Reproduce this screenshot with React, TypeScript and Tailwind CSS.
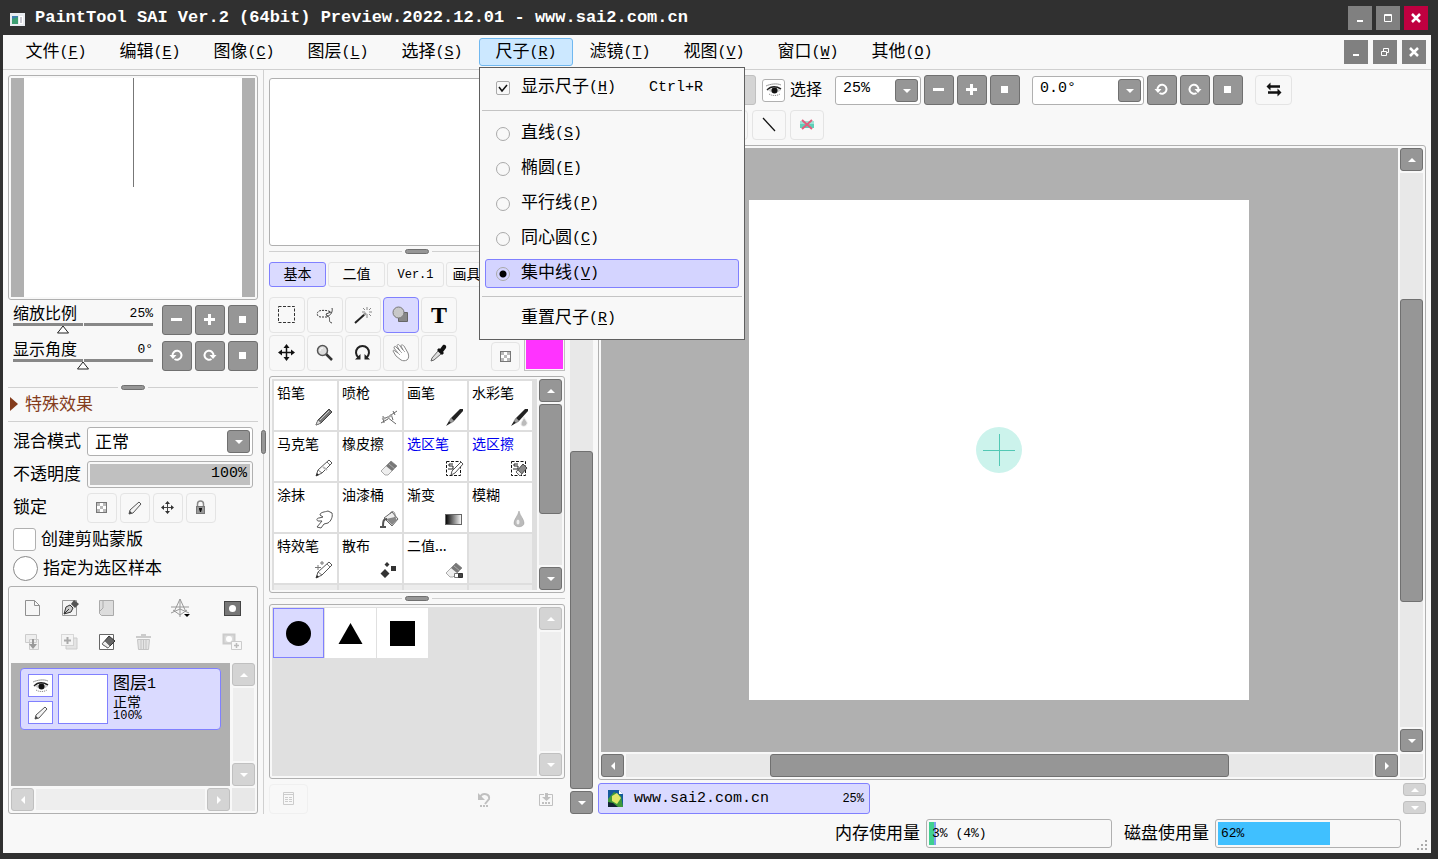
import { useState } from 'react'
import type { ReactNode } from 'react'
import clsx from 'clsx'

type Children = { children?: ReactNode }

const MENUS = [
  { label: '文件', key: 'F' },
  { label: '编辑', key: 'E' },
  { label: '图像', key: 'C' },
  { label: '图层', key: 'L' },
  { label: '选择', key: 'S' },
  { label: '尺子', key: 'R' },
  { label: '滤镜', key: 'T' },
  { label: '视图', key: 'V' },
  { label: '窗口', key: 'W' },
  { label: '其他', key: 'O' },
]

const RULERS = [
  { label: '直线', key: 'S' },
  { label: '椭圆', key: 'E' },
  { label: '平行线', key: 'P' },
  { label: '同心圆', key: 'C' },
  { label: '集中线', key: 'V' },
]

const PENCIL = (
  <>
    <path d="M2 18l2-6L15 2l3 3L8 15z" fill="#fff" stroke="#555" />
    <path d="M4 12l4 3M13 4l3 3" stroke="#777" fill="none" />
    <path d="M2 18l1-3 2 2z" fill="#222" />
  </>
)

const ERASER = (
  <>
    <path d="M2 13L12 3l6 5L9 17H6z" fill="#eee" stroke="#aaa" />
    <path d="M7 8l5-5 6 5-5 5z" fill="#777" />
    <path d="M10 6l6 5" stroke="#aaa" />
  </>
)

const BRUSH = (
  <>
    <path d="M7 11L16 2h3v2l-9 10z" fill="#222" />
    <path d="M7 11l3 3-3 2-2-2z" fill="#999" stroke="#555" strokeWidth=".5" />
    <path d="M5 14l2 2-5 3z" fill="#222" />
  </>
)

const ICONS = {
  marquee: <rect x="1.500" y="1.500" width="16" height="16" fill="none" stroke="#333" strokeDasharray="3 1.500" />,
  lasso: (
    <>
      <path d="M12 12H6c-4 0-5-4-2-6 3-1 8-1 12 1" fill="none" stroke="#333" strokeDasharray="2 1" />
      <path d="M17 3c1 3-1 8-5 8l-1-2 5-2M12 11c5 1 0 6 5 7" fill="none" stroke="#444" />
    </>
  ),
  wand: (
    <>
      <path d="M2 18L12 9" stroke="#222" strokeWidth="2" />
      <path d="M11 10l2-2" stroke="#999" strokeWidth="2" />
      <path d="M14 2v3M14 9v4M9 7h3M16 7h3M10 3l2 2M16 5l2-2M16 9l2 2" stroke="#888" />
    </>
  ),
  shapes: (
    <>
      <path d="M7.500 7.500h9v9h-9z" fill="#888" stroke="#666" />
      <circle cx="7.500" cy="7.500" r="5.500" fill="#c8c8c8" stroke="#777" />
    </>
  ),
  move: (
    <>
      <path d="M9.500 3v13M3 9.500h13" stroke="#111" strokeWidth="1.500" />
      <path d="M9.500 1l3 4h-6zM9.500 18l3-4h-6zM1 9.500l4-3v6zM18 9.500l-4-3v6z" fill="#111" />
    </>
  ),
  zoom: (
    <>
      <path d="M11 11l6 6" stroke="#333" strokeWidth="2.500" />
      <circle cx="7.500" cy="7.500" r="5" fill="#ddd" stroke="#555" strokeWidth="1.500" />
      <path d="M5 8c0-2 1-3 3-3" stroke="#fff" fill="none" />
    </>
  ),
  turn: (
    <>
      <path d="M5.500 14.500a6.500 6.500 0 1 1 8 0" fill="none" stroke="#222" strokeWidth="2" />
      <path d="M2 16.500h5.500V11zM17 16.500h-5.500V11z" fill="#222" />
    </>
  ),
  hand: (
    <>
      <path
        d="M2 8c0-1 1-1 2 0l3 2-4-5c0-2 1-2 2-1l4 4-3-5c0-2 2-2 3 0l3 4-2-4c0-2 2-1 3 0l4 7c1 3 1 5-1 7-2 1-4 1-6 0l-5-4z"
        fill="#fff"
        stroke="#888"
      />
      <path d="M9 8l2 2M12 7l2 2M7 10l2 2" stroke="#aaa" />
    </>
  ),
  dropper: (
    <>
      <path d="M9 8l3 3-7 6-3 1 1-3z" fill="#ddd" stroke="#666" />
      <path d="M8 7l2-2 1 1 3-4c2-1 4 1 3 3l-3 4 1 1-2 2z" fill="#111" />
    </>
  ),
  pencil: (
    <>
      <path d="M2 18l2-5L15 2l3 3L7 16z" fill="#777" stroke="#444" />
      <path d="M4 13l3 3-5 2z" fill="#ddd" stroke="#666" strokeWidth=".5" />
      <path d="M6 13L15 4" stroke="#ccc" />
    </>
  ),
  airbrush: (
    <>
      <path d="M3 12l6-2 9-6M8 10l9 7M4 9l1 7M12 7l2 6M2 16l7-4M14 4l2 4" stroke="#666" fill="none" />
      <path d="M8 11l5-3M3 12l4-1" stroke="#aaa" strokeWidth="2" />
    </>
  ),
  brush: BRUSH,
  watercolor: (
    <>
      {BRUSH}
      <path d="M15 10c1 3 4 5 3 7-1 3-6 3-6 0 0-2 2-4 3-7z" fill="#bbb" stroke="#eee" />
    </>
  ),
  marker: (
    <>
      {PENCIL}
      <path d="M9 9l4 3" stroke="#bbb" strokeWidth="2" />
    </>
  ),
  eraser: ERASER,
  selectPen: (
    <>
      <rect x="2.500" y="3.500" width="14" height="14" fill="none" stroke="#111" strokeDasharray="3 1.500" />
      <path d="M9 6H5v2h4v3H4" stroke="#222" fill="none" />
      <path d="M7 17l1-4 9-9 2 2-8 9z" fill="#fff" stroke="#555" />
    </>
  ),
  selectEraser: (
    <>
      <rect x="2.500" y="3.500" width="14" height="14" fill="none" stroke="#111" strokeDasharray="3 1.500" />
      <path d="M9 6H5v2h4v3H4" stroke="#222" fill="none" />
      <path d="M7 14l7-8 4 4-7 8z" fill="#888" stroke="#444" />
      <path d="M7 14l4 4 2-2-4-4z" fill="#eee" stroke="#666" />
    </>
  ),
  smudge: (
    <path
      d="M3 18l5-6H4c-2-1-1-3 1-3l4-1-3-2c0-3 5-3 8-4l4 2c1 4-1 8-4 10l-4 1-3 4z"
      fill="#fff"
      stroke="#555"
    />
  ),
  bucket: (
    <>
      <path d="M5 9l8-6 6 7-6 7z" fill="#eee" stroke="#666" />
      <path d="M7 10l9-2 2 3-5 5z" fill="#888" />
      <path d="M11 5c2-5 6-2 5 4" stroke="#777" fill="none" />
      <path d="M8 10c-4 0-4 3-4 8M1 18h6" stroke="#555" strokeWidth="2" fill="none" />
    </>
  ),
  blur: (
    <>
      <path d="M10 2c1 5 5 8 5 12 0 5-10 5-10 0 0-4 4-7 5-12z" fill="#bbb" stroke="#999" strokeWidth=".5" />
      <ellipse cx="9" cy="13" rx="1.500" ry="2.500" fill="#eee" />
    </>
  ),
  effect: (
    <>
      {PENCIL}
      <path d="M4 5v5M1 7.500h6M8 1v4M6 3h4" stroke="#777" />
    </>
  ),
  scatter: (
    <path d="M8 2l2.500 2.500L8 7 5.500 4.500zM6 9l4.500 4.500L6 18l-4.500-4.500zM12 6h5v5h-5z" fill="#333" />
  ),
  binaryEraser: (
    <>
      {ERASER}
      <path d="M10.500 13.500h4v4h-4z" fill="#fff" stroke="#777" />
      <path d="M14.500 13.500h4v4h-4z" fill="#444" stroke="#333" />
    </>
  ),
  checker: (
    <>
      <rect x="4.500" y="4.500" width="10" height="10" fill="#fff" stroke="#777" />
      <path d="M5 5h3v3H5zM11 5h3v3h-3zM8 8h3v3H8zM5 11h3v3H5zM11 11h3v3h-3z" fill="#bbb" />
    </>
  ),
  thinPencil: (
    <>
      <path d="M4 16l1-4 9-8 2 2-8 9z" fill="#f4f4f4" stroke="#555" />
      <path d="M4 16l1-3 2 2z" fill="#444" />
    </>
  ),
  thinMove: (
    <>
      <path d="M9.500 4v11M4 9.500h11" stroke="#444" />
      <path d="M9.500 3l2.500 3H7zM9.500 16l2.500-3H7zM3 9.500L6 7v5zM16 9.500L13 7v5z" fill="#333" />
    </>
  ),
  lock: (
    <>
      <path d="M6.500 9V6c0-4 6-4 6 0v3" fill="none" stroke="#888" strokeWidth="1.500" />
      <rect x="5.500" y="8.500" width="8" height="7" fill="#999" stroke="#777" />
      <path d="M8 10h3v1l-1 3H9l-1-3z" fill="#111" />
    </>
  ),
  eye: (
    <>
      <path d="M2 6c4-2 11-3 15-1" stroke="#999" fill="none" />
      <path d="M3 10c4-4 9-4 14-1" stroke="#222" fill="none" strokeWidth="1.500" />
      <path d="M4 10c3-2 9-2 13 0-4 4-9 4-13 0z" fill="#ccc" />
      <circle cx="10.500" cy="10.500" r="3" fill="#111" />
      <path d="M5 14c3 2 8 2 11 0" stroke="#777" strokeDasharray="1 1" fill="none" />
    </>
  ),
  newLayer: <path d="M3.500 2.500h9l5 5v10h-14zM12.500 2.500v5h5" fill="#f6f6f6" stroke="#909090" />,
  penLayer: (
    <>
      <path d="M3.500 2.500h14v15h-14z" fill="#f4f4f4" stroke="#999" />
      <path d="M5 16l2-7 4-2 3 3-2 4z" fill="#ccc" stroke="#333" />
      <path d="M5 16l5-5" stroke="#333" />
      <path d="M12 6l3-4 5 4-4 4z" fill="#555" />
    </>
  ),
  folder: (
    <>
      <path d="M3.500 2.500h14v15h-12l-2-2z" fill="#ddd" stroke="#aaa" />
      <path d="M7 3v7l-3 3" stroke="#aaa" fill="none" />
    </>
  ),
  perspective: (
    <>
      <path d="M10 1L4 14M10 1l6 13M10 1v18M1 9h18M1 15l9-4 9 4M3 12l7 5 7-5" stroke="#999" fill="none" />
      <path d="M14 16h6l-3 3z" fill="#000" />
    </>
  ),
  mask: (
    <>
      <rect x="2.500" y="3.500" width="16" height="14" fill="#777" stroke="#444" />
      <circle cx="10.500" cy="10.500" r="3.500" fill="#fff" />
    </>
  ),
  mergeDown: (
    <>
      <path d="M3.500 2.500h11v8h-11zM7.500 7.500h9v10h-9z" fill="#eee" stroke="#ccc" />
      <path d="M10 7v5H7l4 5 4-5h-3V7z" fill="#999" />
    </>
  ),
  duplicate: (
    <>
      <path d="M7 6h11v11H7z" fill="#e4e4e4" stroke="#ccc" />
      <path d="M2.500 2.500h12v11h-12z" fill="#f4f4f4" stroke="#bbb" strokeDasharray="1 1" />
      <path d="M8.500 5v7M5 8.500h7" stroke="#aaa" strokeWidth="2" />
    </>
  ),
  clearLayer: (
    <>
      <path d="M3.500 2.500h14v15h-14z" fill="#fff" stroke="#666" />
      <path d="M6 12l7-8 6 5-7 7z" fill="#666" stroke="#333" />
      <path d="M6 12l3-3 5 5-2 2z" fill="#eee" stroke="#777" />
    </>
  ),
  trash: (
    <>
      <path d="M3 5h15M8 3h5" stroke="#ccc" strokeWidth="2" />
      <path d="M4.500 7.500h12l-1 10h-10z" fill="#e4e4e4" stroke="#c4c4c4" />
      <path d="M8 8v9M10.500 8v9M13 8v9" stroke="#c4c4c4" />
    </>
  ),
  addMask: (
    <>
      <path d="M1.500 2.500h11v9h-11z" fill="#ddd" stroke="#ccc" strokeWidth="2" />
      <circle cx="7" cy="7" r="3" fill="#fff" />
      <path d="M9.500 9.500h10v8h-10z" fill="#f8f8f8" stroke="#ccc" />
      <path d="M14.500 11v5M12 13.500h5" stroke="#bbb" strokeWidth="1.500" />
    </>
  ),
  line: <path d="M4 3l12 13" stroke="#111" strokeWidth="1.200" />,
  noColor: (
    <>
      <path d="M3 6h14v7H3z" fill="#5fcfb8" />
      <path d="M3 6h14v3H3z" fill="#9be3d5" />
      <path d="M5 5l10 9M15 5L5 14" stroke="#e05f7c" strokeWidth="2" />
    </>
  ),
  swap: (
    <>
      <path d="M6 6.500h10M4 12.500h10" stroke="#111" strokeWidth="2.500" />
      <path d="M2.500 6.500l4-4v8zM17.500 12.500l-4-4v8z" fill="#111" />
    </>
  ),
  list: (
    <path
      d="M4.500 3.500h10v12h-10zM5 5.500h9M6 8.500h3M10 8.500h3M6 10.500h3M10 10.500h3M6 12.500h3M10 12.500h3"
      fill="none"
      stroke="#ccc"
    />
  ),
  undo: (
    <>
      <path d="M6 8c3-5 10-3 9 2l-4 5" stroke="#c0c0c0" strokeWidth="2" fill="none" />
      <path d="M4 4v7h7z" fill="#c0c0c0" />
      <path d="M6 17h8" stroke="#c0c0c0" strokeWidth="2" strokeDasharray="2 1" />
    </>
  ),
  save: (
    <>
      <path d="M8 5.500H3.500v11h13v-11H12" fill="none" stroke="#c0c0c0" />
      <path d="M9 4h3v4h3l-4.500 4L6 8h3z" fill="#c0c0c0" />
      <path d="M6 14h9" stroke="#c0c0c0" strokeWidth="2" strokeDasharray="2 1" />
    </>
  ),
  minus: <path d="M4 9.500h11" stroke="#fff" strokeWidth="3" />,
  plus: <path d="M4 9.500h11M9.500 4v11" stroke="#fff" strokeWidth="3" />,
  square: <path d="M6 6h7v7H6z" fill="#fff" />,
  rotateLeft: (
    <>
      <path d="M5.500 9.500a4.500 4.500 0 1 1 2 3.500" fill="none" stroke="#fff" strokeWidth="2" />
      <path d="M2.500 9h7l-3.500 4z" fill="#fff" />
    </>
  ),
  rotateRight: (
    <>
      <path d="M13.500 9.500a4.500 4.500 0 1 0-2 3.500" fill="none" stroke="#fff" strokeWidth="2" />
      <path d="M16.500 9h-7l3.500 4z" fill="#fff" />
    </>
  ),
  up: <path d="M10 8l4 4H6z" fill="#fff" />,
  down: <path d="M6 8h8l-4 4z" fill="#fff" />,
  left: <path d="M12 6v8l-4-4z" fill="#fff" />,
  right: <path d="M8 6v8l4-4z" fill="#fff" />,
  winMin: <path d="M7 13h6" stroke="#fff" strokeWidth="2" />,
  winMax: <path d="M6.500 6.500h7v7h-7zM6 7.500h8" fill="none" stroke="#fff" />,
  winRestore: <path d="M8.500 9V6.500h5v4H12M6.500 9.500h5v4h-5z" fill="none" stroke="#fff" />,
  winClose: <path d="M6 6l8 8M14 6l-8 8" stroke="#fff" strokeWidth="2.500" />,
}

type IconName = keyof typeof ICONS | 'gradient'

const TOOLS: { name: string; icon?: IconName }[] = [
  { name: '选框', icon: 'marquee' },
  { name: '套索', icon: 'lasso' },
  { name: '魔棒', icon: 'wand' },
  { name: '形状', icon: 'shapes' },
  { name: '文字' },
  { name: '移动', icon: 'move' },
  { name: '缩放', icon: 'zoom' },
  { name: '旋转', icon: 'turn' },
  { name: '抓手', icon: 'hand' },
  { name: '吸管', icon: 'dropper' },
]

const BRUSHES: { name: string; icon: IconName; blue?: boolean }[] = [
  { name: '铅笔', icon: 'pencil' },
  { name: '喷枪', icon: 'airbrush' },
  { name: '画笔', icon: 'brush' },
  { name: '水彩笔', icon: 'watercolor' },
  { name: '马克笔', icon: 'marker' },
  { name: '橡皮擦', icon: 'eraser' },
  { name: '选区笔', icon: 'selectPen', blue: true },
  { name: '选区擦', icon: 'selectEraser', blue: true },
  { name: '涂抹', icon: 'smudge' },
  { name: '油漆桶', icon: 'bucket' },
  { name: '渐变', icon: 'gradient' },
  { name: '模糊', icon: 'blur' },
  { name: '特效笔', icon: 'effect' },
  { name: '散布', icon: 'scatter' },
  { name: '二值...', icon: 'binaryEraser' },
]

function Icon({ name }: { name: IconName }) {
  if (name === 'gradient') {
    return (
      <svg width="20" height="20" viewBox="0 0 20 20" className="shrink-0">
        <defs>
          <linearGradient id="ramp">
            <stop offset="0" stopColor="#000" />
            <stop offset="1" stopColor="#fff" />
          </linearGradient>
        </defs>
        <rect x="1.500" y="5.500" width="16" height="10" fill="url(#ramp)" stroke="#666" />
      </svg>
    )
  }
  return (
    <svg width="20" height="20" viewBox="0 0 20 20" fill="none" className="shrink-0">
      {ICONS[name]}
    </svg>
  )
}

function Latin({ children, className = 'text-[15px]' }: Children & { className?: string }) {
  return <span className={clsx("align-[1px] font-['Liberation_Mono',monospace]", className)}>{children}</span>
}

function Accel({ label, letter }: { label: string; letter: string }) {
  return (
    <span className="whitespace-nowrap">
      {label}
      <Latin>
        (<u className="underline-offset-2">{letter}</u>)
      </Latin>
    </span>
  )
}

// Raised dark button: zoom, rotate and scroll arrows
function GrayButton({ icon, label, className = 'size-[30px]', disabled = false }: {
  icon: IconName
  label: string
  className?: string
  disabled?: boolean
}) {
  return (
    <button
      aria-label={label}
      disabled={disabled}
      className={clsx(
        'flex shrink-0 items-center justify-center overflow-hidden rounded-[3px] border',
        disabled ? 'border-[#c0c0c0] bg-[#d4d4d4]' : 'border-[#707070] bg-[#969696]',
        className
      )}
    >
      <Icon name={icon} />
    </button>
  )
}

// Flat button with a faint outline
function FlatButton({ icon, label, className = 'size-[30px]' }: { icon: IconName; label: string; className?: string }) {
  return (
    <button
      aria-label={label}
      className={clsx('flex shrink-0 items-center justify-center rounded-[4px] border border-[#e4e4e4]', className)}
    >
      <Icon name={icon} />
    </button>
  )
}

function Panel({ children, className }: Children & { className?: string }) {
  return <div className={clsx('rounded-[3px] border border-[#b0b0b0] p-[2px]', className)}>{children}</div>
}

function Splitter() {
  return (
    <div className="flex h-[5px] shrink-0 items-center gap-[3px]">
      <div className="h-px flex-1 bg-[#d0d0d0]" />
      <div className="h-[5px] w-6 rounded-full border border-[#707070] bg-[#969696]" />
      <div className="h-px flex-1 bg-[#d0d0d0]" />
    </div>
  )
}

function VScroll({ thumb, disabled }: { thumb?: string; disabled?: boolean }) {
  return (
    <div className="flex w-[23px] shrink-0 flex-col gap-[2px]">
      <GrayButton icon="up" label="向上" className="h-[23px]" disabled={disabled} />
      <div className={clsx('flex min-h-0 flex-1 flex-col', disabled ? 'mx-px bg-[#eeeeee]' : 'bg-[#e8e8e8]')}>
        {thumb && <div className={clsx('rounded-[3px] border border-[#707070] bg-[#969696]', thumb)} />}
      </div>
      <GrayButton icon="down" label="向下" className="h-[23px]" disabled={disabled} />
    </div>
  )
}

function HScroll({ thumb, disabled }: { thumb?: string; disabled?: boolean }) {
  return (
    <div className="flex h-[23px] min-w-0 flex-1 gap-[2px]">
      <GrayButton icon="left" label="向左" className="w-[23px]" disabled={disabled} />
      <div className={clsx('flex min-w-0 flex-1', disabled ? 'my-px bg-[#eeeeee]' : 'bg-[#e8e8e8]')}>
        {thumb && <div className={clsx('rounded-[3px] border border-[#707070] bg-[#969696]', thumb)} />}
      </div>
      <GrayButton icon="right" label="向右" className="w-[23px]" disabled={disabled} />
    </div>
  )
}

function Select({ label, value, className, textClass }: {
  label: string
  value: string
  className?: string
  textClass: string
}) {
  return (
    <div className={clsx('relative h-[29px]', className)}>
      <select
        aria-label={label}
        className={clsx(
          'block size-full appearance-none rounded-[3px] border border-[#b0b0b0] bg-white pb-[2px] pl-[7px]',
          textClass
        )}
      >
        <option>{value}</option>
      </select>
      <span className="pointer-events-none absolute top-[3px] right-[3px] flex size-[23px] items-center justify-center rounded-[3px] border border-[#707070] bg-[#969696]">
        <Icon name="down" />
      </span>
    </div>
  )
}

function NavSlider({ label, value, percent }: { label: string; value: string; percent: number }) {
  return (
    <label className="relative block h-[30px] min-w-0 flex-1">
      <span className="flex h-[18px] items-center justify-between text-[16px]">
        <span className="pb-1">{label}</span>
        <Latin className="text-[13px]">{value}</Latin>
      </span>
      <span className="flex h-[3px] gap-px">
        <span className="flex-1 bg-[#888]" />
        <span className="flex-1 bg-[#888]" />
      </span>
      <svg
        className="absolute top-5 -translate-x-1/2"
        style={{ left: `${percent}%` }}
        width="14"
        height="9"
        viewBox="0 0 14 9"
      >
        <path d="M7 1l5.500 7h-11z" fill="#fff" stroke="#222" />
      </svg>
      <input type="range" aria-label={label} defaultValue={percent} className="absolute inset-0 size-full opacity-0" />
    </label>
  )
}

function WindowButton({ icon, label, red }: { icon: IconName; label: string; red?: boolean }) {
  return (
    <button
      aria-label={label}
      className={clsx('flex size-6 items-center justify-center', red ? 'bg-[#c00040]' : 'bg-[#808080]')}
    >
      <Icon name={icon} />
    </button>
  )
}

function TitleBar() {
  return (
    <header className="flex h-[35px] shrink-0 items-center pr-[3px] pl-[7px] text-white">
      <svg width="15" height="13" viewBox="0 0 15 13" className="mt-1">
        <path d="M0 0h15v13H0z" fill="#e8ecf0" />
        <path d="M2 3h6v8H2z" fill="#3f7fb0" />
        <path d="M2 6l6-2v7H2z" fill="#3d9f72" />
        <path d="M9 3h4v8H9z" fill="#fff" />
        <path d="M10 5h2M10 7h2M10 9h2" stroke="#99a" />
      </svg>
      <h1 className="ml-[10px] flex-1 font-['Liberation_Mono',monospace] text-[17px] font-bold whitespace-nowrap">
        PaintTool SAI Ver.2 (64bit) Preview.2022.12.01 - www.sai2.com.cn
      </h1>
      <div className="flex gap-1">
        <WindowButton icon="winMin" label="最小化" />
        <WindowButton icon="winMax" label="最大化" />
        <WindowButton icon="winClose" label="关闭" red />
      </div>
    </header>
  )
}

function RulerMenu({ ruler, onPick }: { ruler: string; onPick: (key: string) => void }) {
  return (
    <div className="absolute top-[29px] left-0 z-10 w-[266px] border border-[#606060] bg-[#f8f8f8] pt-[2px] pb-[3px]">
      <div className="px-[5px] py-[3px]">
        <label className="flex h-[29px] items-center px-[11px]">
          <input type="checkbox" defaultChecked className="size-[14px] appearance-none rounded-[2px] border border-[#aaa]" />
          <svg width="14" height="14" viewBox="0 0 14 14" className="pointer-events-none absolute">
            <path d="M3 6l3 4 5-6" fill="none" stroke="#111" strokeWidth="1.500" />
          </svg>
          <span className="ml-[11px] w-32 pb-[3px]">
            <Accel label="显示尺子" letter="H" />
          </span>
          <Latin className="pt-[2px] text-[15px]">Ctrl+R</Latin>
        </label>
      </div>
      <hr className="mx-[2px] my-[5px] border-[#c4c4c4]" />
      {RULERS.map((r) => (
        <div key={r.key} className="px-[5px] py-[3px]">
          <label
            className={clsx(
              'flex h-[29px] items-center rounded-[3px] border px-[10px]',
              r.key === ruler ? 'border-[#8080ff] bg-[#d4d4ff]' : 'border-transparent'
            )}
          >
            <input
              type="radio"
              name="ruler"
              checked={r.key === ruler}
              onChange={() => onPick(r.key)}
              className="size-[14px] appearance-none rounded-full border border-[#aaa] checked:bg-[radial-gradient(circle,#000_3px,transparent_4px)]"
            />
            <span className="ml-[11px] pb-[3px]">
              <Accel label={r.label} letter={r.key} />
            </span>
          </label>
        </div>
      ))}
      <hr className="mx-[2px] mt-[5px] mb-1 border-[#c4c4c4]" />
      <div className="px-[5px] py-[3px]">
        <button className="flex h-[29px] w-full items-center pb-[3px] pl-9">
          <Accel label="重置尺子" letter="R" />
        </button>
      </div>
    </div>
  )
}

function MenuBar() {
  const [ruler, setRuler] = useState('V')

  return (
    <nav className="flex h-[35px] shrink-0 items-start border-b border-[#d0d0d0] pt-[3px] pl-[6px] text-[17px]">
      {MENUS.map((m) => (
        <div key={m.key} className="relative w-[94px]">
          <button
            className={clsx(
              'flex h-7 w-full items-center justify-center rounded-[3px] border pb-[2px]',
              m.key === 'R' ? 'border-[#70b8f0] bg-[#cce8ff]' : 'border-transparent'
            )}
          >
            <Accel label={m.label} letter={m.key} />
          </button>
          {m.key === 'R' && <RulerMenu ruler={ruler} onPick={setRuler} />}
        </div>
      ))}
      <div className="mt-[2px] mr-[5px] ml-auto flex gap-[5px]">
        <WindowButton icon="winMin" label="最小化文档" />
        <WindowButton icon="winRestore" label="还原文档" />
        <WindowButton icon="winClose" label="关闭文档" />
      </div>
    </nav>
  )
}

function LayerPanel() {
  const tools: IconName[][] = [
    ['newLayer', 'penLayer', 'folder'],
    ['mergeDown', 'duplicate', 'clearLayer', 'trash'],
  ]

  return (
    <Panel className="mt-[5px] flex min-h-0 flex-1 flex-col">
      <div className="flex h-[74px] shrink-0 flex-col justify-center gap-[6px] pr-[9px] pb-[2px] pl-[7px]">
        {tools.map((row, i) => (
          <div key={i} className="flex h-7 items-center gap-[9px]">
            {row.map((t) => (
              <button key={t} aria-label={t} className="flex size-7 items-center justify-center">
                <Icon name={t} />
              </button>
            ))}
            {i === 0 && (
              <button aria-label="perspective" className="ml-[37px] flex size-7 items-center justify-center">
                <Icon name="perspective" />
              </button>
            )}
            <button aria-label="mask" className="ml-auto flex size-7 items-center justify-center">
              <Icon name={i === 0 ? 'mask' : 'addMask'} />
            </button>
          </div>
        ))}
      </div>
      <div className="flex min-h-0 flex-1 gap-[2px]">
        <div className="min-w-0 flex-1 bg-[#b0b0b0] pt-[5px] pr-[9px] pl-[9px]">
          <div className="flex h-[62px] rounded-[4px] border border-[#8080ff] bg-[#dadaff] p-[5px] pl-[7px]">
            <div className="flex flex-col gap-1">
              <button aria-label="显示图层" className="flex h-[23px] w-[25px] items-center justify-center border border-[#8080ff] bg-white">
                <Icon name="eye" />
              </button>
              <button aria-label="编辑图层" className="flex h-[23px] w-[25px] items-center justify-center border border-[#8080ff] bg-white">
                <Icon name="thinPencil" />
              </button>
            </div>
            <div className="ml-[5px] size-[50px] border border-[#8080ff] bg-white" />
            <div className="ml-[5px] flex flex-col">
              <span className="h-[18px] text-[17px] leading-[16px]">
                图层<Latin>1</Latin>
              </span>
              <span className="h-[18px] text-[14px] leading-[18px]">正常</span>
              <Latin className="text-[12px] leading-[12px]">100%</Latin>
            </div>
          </div>
        </div>
        <VScroll disabled />
      </div>
      <div className="mt-[2px] flex gap-[2px]">
        <HScroll disabled />
        <div className="w-[23px] bg-[#e8e8e8]" />
      </div>
    </Panel>
  )
}

function LeftColumn() {
  return (
    <aside className="relative flex w-[261px] shrink-0 flex-col border-r border-[#d0d0d0] px-[5px] pt-[5px] text-[17px]">
      <Panel className="h-[225px] shrink-0">
        <div className="flex h-full justify-center bg-[#b0b0b0] px-[13px]">
          <div className="flex w-full justify-center bg-white">
            <div className="h-[109px] w-px bg-[#777]" />
          </div>
        </div>
      </Panel>
      <div className="mt-[5px] flex gap-[9px] pl-[5px]">
        <NavSlider label="缩放比例" value="25%" percent={36} />
        <div className="flex gap-[3px]">
          <GrayButton icon="minus" label="缩小" />
          <GrayButton icon="plus" label="放大" />
          <GrayButton icon="square" label="重置缩放" />
        </div>
      </div>
      <div className="mt-[6px] mb-[14px] flex gap-[9px] pl-[5px]">
        <NavSlider label="显示角度" value="0°" percent={50} />
        <div className="flex gap-[3px]">
          <GrayButton icon="rotateLeft" label="向左旋转" />
          <GrayButton icon="rotateRight" label="向右旋转" />
          <GrayButton icon="square" label="重置角度" />
        </div>
      </div>
      <Splitter />
      <button className="flex h-8 shrink-0 items-center border-b border-[#d0d0d0] pb-1 pl-[2px] text-[#843c1c]">
        <svg width="8" height="14" viewBox="0 0 8 14">
          <path d="M0 0l8 7-8 7z" fill="#843c1c" />
        </svg>
        <span className="ml-[7px] pb-[2px]">特殊效果</span>
      </button>
      <div className="mt-[5px] flex h-[29px] items-center px-[5px]">
        <span className="w-[74px] shrink-0 pb-1">混合模式</span>
        <Select label="混合模式" value="正常" className="flex-1" textClass="text-[17px]" />
      </div>
      <div className="mt-[5px] flex h-[27px] items-center px-[5px]">
        <span className="w-[74px] shrink-0 pb-1">不透明度</span>
        <Panel className="h-[27px] flex-1">
          <div className="flex h-full items-center justify-end bg-[#c0c0c0] pr-[3px]">
            <Latin>100%</Latin>
          </div>
        </Panel>
      </div>
      <div className="mt-[5px] flex h-[30px] items-center gap-[3px] pl-[5px]">
        <span className="w-[71px] shrink-0 pb-1">锁定</span>
        <FlatButton icon="checker" label="锁定不透明度" />
        <FlatButton icon="thinPencil" label="锁定绘制" />
        <FlatButton icon="thinMove" label="锁定移动" />
        <FlatButton icon="lock" label="全部锁定" />
      </div>
      <label className="mt-[5px] flex h-[23px] items-center gap-[5px] pl-[5px]">
        <input type="checkbox" className="size-[23px] appearance-none rounded-[3px] border border-[#b0b0b0] bg-white" />
        <span className="pb-1">创建剪贴蒙版</span>
      </label>
      <label className="mt-[5px] flex h-[25px] items-center gap-[5px] pl-[5px]">
        <input type="radio" className="size-[25px] appearance-none rounded-full border border-[#888] bg-white" />
        <span className="pb-1">指定为选区样本</span>
      </label>
      <LayerPanel />
      <div className="absolute top-[360px] -right-[3px] h-6 w-[5px] rounded-full border border-[#707070] bg-[#969696]" />
    </aside>
  )
}

function BrushPanel() {
  return (
    <Panel className="mt-[5px] flex h-[217px] shrink-0 gap-[2px]">
      <div className="grid min-w-0 flex-1 auto-rows-[49px] grid-cols-4 gap-[2px] overflow-hidden bg-[#dedede] pt-[2px] pr-[5px] pl-[2px]">
        {BRUSHES.map((b) => (
          <button
            key={b.name}
            className="flex flex-col items-start justify-between bg-white px-[3px] pt-px pb-[3px] text-[14px] leading-5"
          >
            <span className={b.blue ? 'text-[#0000f0]' : undefined}>{b.name}</span>
            <span className="self-end">
              <Icon name={b.icon} />
            </span>
          </button>
        ))}
        {[0, 1, 2, 3, 4].map((n) => (
          <div key={n} className="bg-[#ececec]" />
        ))}
      </div>
      <VScroll thumb="h-[110px]" />
    </Panel>
  )
}

function ShapePanel() {
  const shapes = [
    { name: '圆形', path: <circle cx="12.500" cy="12.500" r="12.500" /> },
    { name: '三角形', path: <path d="M12.500 2l12 21H.5z" /> },
    { name: '方形', path: <path d="M0 0h25v25H0z" /> },
  ]

  return (
    <Panel className="mt-[3px] flex min-h-0 flex-1 gap-[2px]">
      <div className="flex min-w-0 flex-1 items-start gap-px bg-[#e0e0e0] pt-px pl-px">
        {shapes.map((s, i) => (
          <button
            key={s.name}
            aria-label={s.name}
            className={clsx(
              'flex h-[50px] w-[51px] items-center justify-center',
              i === 0 ? 'border border-[#8080ff] bg-[#dadaff]' : 'bg-white'
            )}
          >
            <svg width="25" height="25" viewBox="0 0 25 25">
              {s.path}
            </svg>
          </button>
        ))}
      </div>
      <VScroll disabled />
    </Panel>
  )
}

function ToolColumn() {
  return (
    <section className="flex w-[334px] shrink-0 gap-[5px] px-[5px]">
      <div className="flex min-w-0 flex-1 flex-col pt-2">
        <Panel className="mb-[3px] h-[168px] shrink-0 bg-white" />
        <Splitter />
        <div className="mt-2 flex shrink-0 gap-[2px] text-[14px]">
          {['基本', '二值', 'Ver.1', '画具'].map((tab, i) => (
            <button
              key={tab}
              className={clsx(
                'flex h-[25px] w-[57px] items-center justify-center rounded-[3px] border pb-[2px]',
                i === 0 ? 'border-[#8080ff] bg-[#dadaff]' : 'border-[#e4e4e4]',
                i === 3 && 'pr-4'
              )}
            >
              {tab === 'Ver.1' ? <Latin className="pt-[2px] text-[12px]">{tab}</Latin> : tab}
            </button>
          ))}
        </div>
        <div className="mt-[10px] flex shrink-0 items-end justify-between">
          <div className="grid grid-cols-[repeat(5,36px)] gap-[2px]">
            {TOOLS.map((t) => (
              <button
                key={t.name}
                aria-label={t.name}
                className={clsx(
                  'flex size-9 items-center justify-center rounded-[4px] border',
                  t.icon === 'shapes' ? 'border-[#8080ff] bg-[#dadaff]' : 'border-[#e4e4e4]'
                )}
              >
                {t.icon ? (
                  <Icon name={t.icon} />
                ) : (
                  <span className="font-['Liberation_Serif',serif] text-[24px] leading-none font-bold">T</span>
                )}
              </button>
            ))}
          </div>
          <div className="flex items-end gap-1">
            <FlatButton icon="checker" label="透明色" className="size-[29px]" />
            <div className="size-[41px] border border-[#c0c0c0] p-px">
              <div className="size-full bg-[#ff33ff]" />
            </div>
          </div>
        </div>
        <BrushPanel />
        <div className="h-[3px] shrink-0" />
        <Splitter />
        <ShapePanel />
        <div className="mt-[5px] flex shrink-0 items-center pr-[9px]">
          <FlatButton icon="list" label="列表" className="h-[30px] w-[39px] border-[#f0f0f0]" />
          <button aria-label="撤销" className="ml-auto">
            <Icon name="undo" />
          </button>
          <button aria-label="保存" className="ml-[42px]">
            <Icon name="save" />
          </button>
        </div>
      </div>
      <div className="flex pt-[5px]">
        <VScroll thumb="mt-[351px] h-[339px]" />
      </div>
    </section>
  )
}

function CanvasColumn() {
  return (
    <main className="flex min-w-0 flex-1 flex-col pt-[5px] pr-[5px]">
      <div className="flex h-[30px] shrink-0 items-center gap-[3px] text-[16px]">
        <div className="flex gap-[2px]">
          {['a', 'b', 'c', 'd', 'e'].map((k) => (
            <GrayButton key={k} icon="right" label="历史" disabled />
          ))}
        </div>
        <button aria-label="显示选区" className="ml-[3px] flex size-[23px] items-center justify-center rounded-[3px] border border-[#b0b0b0] bg-white">
          <Icon name="eye" />
        </button>
        <span className="ml-[2px] w-[42px] pb-1">选择</span>
        <Select label="缩放" value="25%" className="w-[86px] self-end" textClass="font-['Liberation_Mono',monospace] text-[15px]" />
        <GrayButton icon="minus" label="缩小" />
        <GrayButton icon="plus" label="放大" />
        <GrayButton icon="square" label="重置缩放" />
        <Select label="角度" value="0.0°" className="ml-[9px] w-[112px] self-end" textClass="font-['Liberation_Mono',monospace] text-[15px]" />
        <GrayButton icon="rotateLeft" label="向左旋转" />
        <GrayButton icon="rotateRight" label="向右旋转" />
        <GrayButton icon="square" label="重置角度" />
        <FlatButton icon="swap" label="翻转" className="ml-[9px] h-[30px] w-[37px]" />
      </div>
      <div className="mt-[5px] flex shrink-0 gap-1 pl-[2px]">
        <FlatButton icon="marquee" label="矩形" className="h-[30px] w-[34px]" />
        <FlatButton icon="shapes" label="形状" className="h-[30px] w-[34px]" />
        <FlatButton icon="thinMove" label="移动" className="h-[30px] w-[34px]" />
        <FlatButton icon="thinPencil" label="铅笔" className="h-[30px] w-[34px]" />
        <FlatButton icon="line" label="直线" className="h-[30px] w-[34px]" />
        <FlatButton icon="noColor" label="无颜色" className="h-[30px] w-[34px]" />
      </div>
      <Panel className="mt-[5px] flex min-h-0 flex-1 flex-col gap-[2px]">
        <div className="flex min-h-0 flex-1 gap-[2px]">
          <div className="flex min-w-0 flex-1 items-center justify-center overflow-hidden bg-[#b0b0b0] pr-px">
            <div className="flex size-[500px] shrink-0 items-center justify-center bg-white">
              <svg width="46" height="46" viewBox="0 0 46 46">
                <circle cx="23" cy="23" r="23" fill="#ccf3ec" />
                <path d="M7 23.500h32M23.500 7v32" stroke="#52c8b4" />
              </svg>
            </div>
          </div>
          <VScroll thumb="mt-[126px] h-[303px]" />
        </div>
        <div className="flex gap-[2px]">
          <HScroll thumb="ml-[144px] w-[459px]" />
          <div className="w-[23px] bg-[#e8e8e8]" />
        </div>
      </Panel>
      <div className="mt-[3px] flex shrink-0 items-center justify-between">
        <button className="flex h-[31px] w-[272px] items-center rounded-[3px] border border-[#8080ff] bg-[#dadaff] pr-[5px] pl-[9px]">
          <svg width="15" height="17" viewBox="0 0 15 17">
            <path d="M0 0h11l4 4v13H0z" fill="#145a9c" />
            <path d="M0 9l6-7 7 4 2 11H0z" fill="#3f9a3a" />
            <path d="M4 6l5-3 4 5-4 6-5-3z" fill="#e0e86a" />
            <path d="M0 12l5 1 5 4H0z" fill="#123" />
            <path d="M11 0v4h4z" fill="#fff" />
          </svg>
          <Latin className="ml-[11px] flex-1 pt-[2px] text-left text-[15px]">www.sai2.com.cn</Latin>
          <Latin className="text-[12px]">25%</Latin>
        </button>
        <div className="flex flex-col gap-[5px]">
          <GrayButton icon="up" label="上一个" className="h-[13px] w-[23px]" disabled />
          <GrayButton icon="down" label="下一个" className="h-[13px] w-[23px]" disabled />
        </div>
      </div>
    </main>
  )
}

function StatusBar() {
  return (
    <footer className="flex h-[38px] shrink-0 items-center justify-end pb-px text-[17px]">
      <span className="mr-[6px] pb-1">内存使用量</span>
      <Panel className="h-[29px] w-[186px]">
        <div className="relative flex h-full items-center">
          <div className="absolute inset-y-0 left-0 w-[7px] border-r-2 border-[#80a0f0] bg-[#40d090]" />
          <Latin className="relative pl-[3px] text-[13px]">3% (4%)</Latin>
        </div>
      </Panel>
      <span className="mr-[6px] ml-3 pb-1">磁盘使用量</span>
      <Panel className="h-[29px] w-[186px]">
        <div className="relative flex h-full items-center">
          <div className="absolute inset-y-0 left-0 bg-[#40c0ff]" style={{ width: '62%' }} />
          <Latin className="relative pl-[3px] text-[13px]">62%</Latin>
        </div>
      </Panel>
      <svg width="10" height="10" viewBox="0 0 10 10" className="mr-1 mb-[2px] ml-4 self-end">
        <path d="M8 0h2v2H8zM4 4h2v2H4zM8 4h2v2H8zM0 8h2v2H0zM4 8h2v2H4zM8 8h2v2H8z" fill="#aaa" />
      </svg>
    </footer>
  )
}

export default function App() {
  return (
    <div className="flex h-screen flex-col overflow-hidden bg-[#303030] pr-[7px] pb-[6px] pl-[3px] font-['Noto_Sans_CJK_SC',sans-serif] text-black">
      <TitleBar />
      <div className="flex min-h-0 flex-1 flex-col bg-[#f8f8f8]">
        <MenuBar />
        <div className="flex min-h-0 flex-1 pb-px">
          <LeftColumn />
          <ToolColumn />
          <CanvasColumn />
        </div>
        <StatusBar />
      </div>
    </div>
  )
}
